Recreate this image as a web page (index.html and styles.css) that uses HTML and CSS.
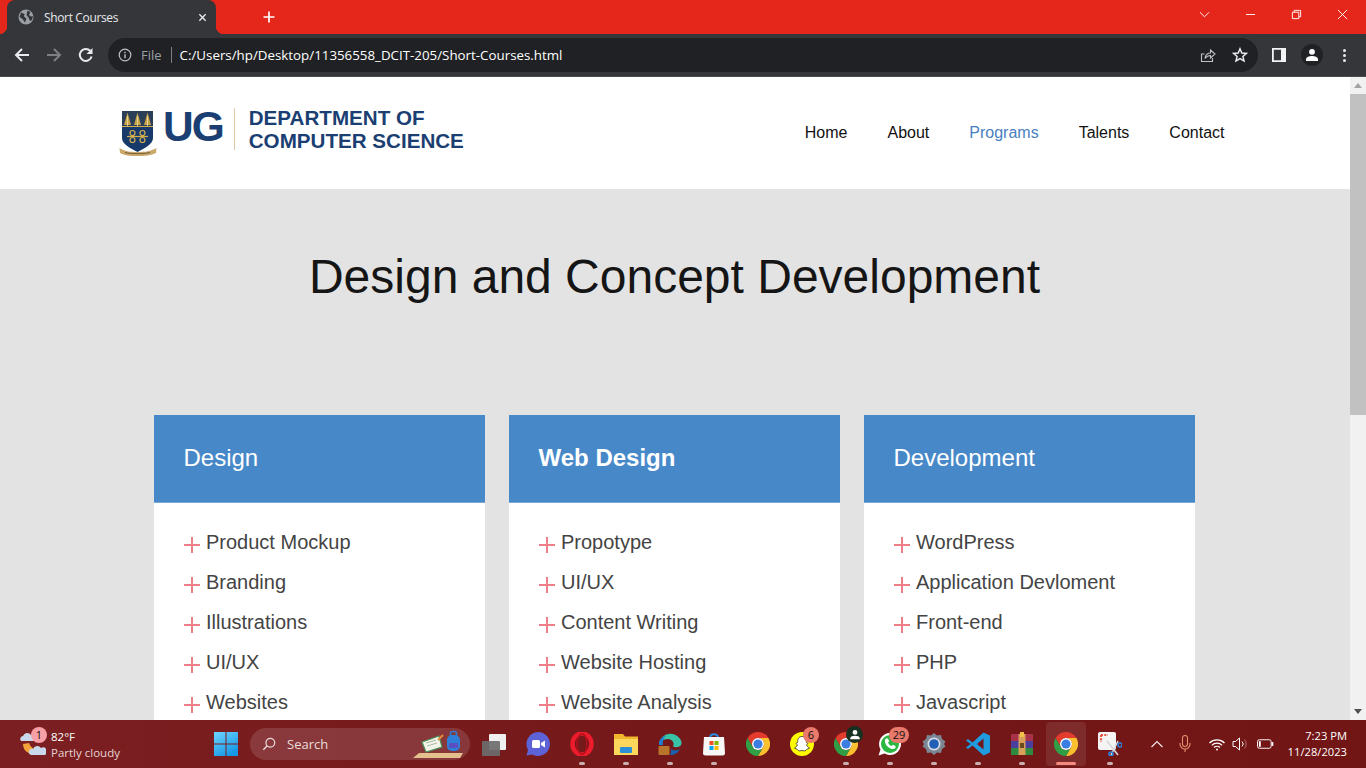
FILE: index.html
```html
<html>
    <head>
        <title>Short Courses</title>
        <link rel="stylesheet" href="styles.css">
    </head>
    <body>
        <svg class="defs" width="0" height="0">
            <defs>
                <linearGradient id="startblue" x1="0" y1="0" x2="0.6" y2="1">
                    <stop offset="0" stop-color="#6fd6ff"/>
                    <stop offset="1" stop-color="#1597e5"/>
                </linearGradient>
            </defs>
            <symbol id="chrome" viewBox="0 0 24 24">
                <path d="M1.600 6A12 12 0 0 1 22.400 6H12A6 6 0 0 0 6.800 15Z" fill="#e33b2e"/>
                <path d="M22.400 6A12 12 0 0 1 12 24L17.200 15A6 6 0 0 0 12 6Z" fill="#fbc02d"/>
                <path d="M12 24A12 12 0 0 1 1.600 6L6.800 15A6 6 0 0 0 17.200 15Z" fill="#2f9e44"/>
                <circle cx="12" cy="12" r="6" fill="#fff"/>
                <circle cx="12" cy="12" r="4.600" fill="#3b7de0"/>
            </symbol>
        </svg>

        <!-- browser frame -->
        <div class="titlebar">
            <div class="tab">
                <svg class="favicon" viewBox="0 0 16 16"><circle cx="8" cy="8" r="7.500" fill="#9aa0a6"/><path d="M3 3.500L6.500 5 6 7.500 8.500 9.500 7 13.500 4.500 10 1.500 8ZM9.500 1.500L12.500 3 11 6 13 7.500 15 7 14 11 12 12 10.500 8.500 8.500 6Z" fill="#35363a"/></svg>
                <span class="tab-title">Short Courses</span>
                <svg class="tab-close" viewBox="0 0 10 10"><path d="M1.500 1.500L8.500 8.500M8.500 1.500L1.500 8.500" stroke="#e8eaed" stroke-width="1.500"/></svg>
            </div>
            <svg class="newtab" viewBox="0 0 12 12"><path d="M6 0.500V11.500M0.500 6H11.500" stroke="#fff" stroke-width="1.700"/></svg>
            <div class="window-btns">
                <svg viewBox="0 0 12 12"><path d="M1 3.500L6 8.500 11 3.500" fill="none" stroke="#fff"/></svg>
                <svg viewBox="0 0 12 12"><path d="M1 6H11" stroke="#fff"/></svg>
                <svg viewBox="0 0 12 12"><path d="M1.500 3.500H8.500V10.500H1.500ZM3.500 3.500V1.500H10.500V8.500H8.500" fill="none" stroke="#fff"/></svg>
                <svg viewBox="0 0 12 12"><path d="M1 1L11 11M11 1L1 11" stroke="#fff"/></svg>
            </div>
        </div>
        <div class="toolbar">
            <svg class="nav-icon" viewBox="0 0 16 16"><path d="M15 8H2M8 2L2 8 8 14" fill="none" stroke="#e8eaed" stroke-width="2"/></svg>
            <svg class="nav-icon" viewBox="0 0 16 16"><path d="M1 8H14M8 2L14 8 8 14" fill="none" stroke="#7c7f84" stroke-width="2"/></svg>
            <svg class="nav-icon" viewBox="0 0 16 16"><path d="M13.600 9.500A6 6 0 1 1 12.200 3.800" fill="none" stroke="#e8eaed" stroke-width="2"/><path d="M14.500 1V7H8.500Z" fill="#e8eaed"/></svg>
            <div class="omnibox">
                <svg class="info-icon" viewBox="0 0 14 14"><circle cx="7" cy="7" r="5.800" fill="none" stroke="#bdc1c6" stroke-width="1.200"/><path d="M7 6.200V10.200M7 3.800V5.200" stroke="#bdc1c6" stroke-width="1.400"/></svg>
                <span class="file-label">File</span>
                <span class="url">C:/Users/hp/Desktop/11356558_DCIT-205/Short-Courses.html</span>
                <svg class="share-icon" viewBox="0 0 16 16"><path d="M4.500 7H1.500V14.500H12.500V11" fill="none" stroke="#bdc1c6" stroke-width="1.100"/><path d="M5 11.500C5.500 8 8 6 10.500 6V3L15 7 10.500 11V8.500C8.500 8.500 6.500 9.500 5 11.500Z" fill="none" stroke="#bdc1c6" stroke-width="1.100"/></svg>
                <svg class="star-icon" viewBox="0 0 16 16"><path d="M8 1.800L9.800 6 14.400 6.400 10.900 9.400 12 13.900 8 11.500 4 13.900 5.100 9.400 1.600 6.400 6.200 6Z" fill="none" stroke="#e8eaed" stroke-width="1.500"/></svg>
            </div>
            <svg class="panel-icon" viewBox="0 0 14 14"><path d="M0 0H14V14H0ZM1.800 1.800V12.200H9V1.800Z" fill="#f1f3f4" fill-rule="evenodd"/></svg>
            <div class="avatar"><svg viewBox="0 0 14 14"><circle cx="7" cy="3.800" r="2.900" fill="#fff"/><path d="M1 13V11.200C1 9 4.500 8 7 8S13 9 13 11.200V13Z" fill="#fff"/></svg></div>
            <div class="kebab"><i></i><i></i><i></i></div>
        </div>

        <!-- page inside browser -->
        <div class="viewport">
            <div class="page">
                <header class="site-header">
                    <div class="logo">
                        <svg class="crest" viewBox="0 0 38 46">
                            <path d="M3 1H34V28C34 34 26 38 18.500 42 11 38 3 34 3 28Z" fill="#173a6b"/>
                            <path d="M3 1H34V16H3Z" fill="#2c3f58"/>
                            <path d="M8.500 2.500L12 15H5ZM18.500 2.500L22 15H15ZM28.500 2.500L32 15H25Z" fill="#c9a54a"/>
                            <path d="M8.500 6V16M18.500 6V16M28.500 6V16" stroke="#f0e3b4" stroke-width=".7"/>
                            <path d="M3 16.500H34" stroke="#d7ae4c"/>
                            <g fill="none" stroke="#d7ae4c" stroke-width="1.200"><circle cx="13.500" cy="23" r="2.500"/><circle cx="23.500" cy="23" r="2.500"/><circle cx="13.500" cy="30" r="2.500"/><circle cx="23.500" cy="30" r="2.500"/><path d="M8 26.500H29"/></g>
                            <path d="M0.500 38C6 41.500 10 42 18.500 42S31 41.500 37.500 38L37 43C32 45.500 26 46 18.500 46S5 45.500 1 43Z" fill="#c9a86a"/>
                            <path d="M6 42.500C12 44 25 44 31 42.500" stroke="#5b4a2a" stroke-width=".8" fill="none"/>
                        </svg>
                        <span class="logo-ug">UG</span>
                        <span class="logo-rule"></span>
                        <span class="logo-dept">DEPARTMENT OF<br>COMPUTER SCIENCE</span>
                    </div>
                    <nav class="site-nav">
                        <a>Home</a>
                        <a>About</a>
                        <a class="active">Programs</a>
                        <a>Talents</a>
                        <a>Contact</a>
                    </nav>
                </header>

                <section class="hero">
                    <h1>Design and Concept Development</h1>
                </section>

                <section class="cards">
                    <div class="card">
                        <h2>Design</h2>
                        <ul>
                            <li>Product Mockup</li>
                            <li>Branding</li>
                            <li>Illustrations</li>
                            <li>UI/UX</li>
                            <li>Websites</li>
                        </ul>
                    </div>
                    <div class="card">
                        <h2 class="strong">Web Design</h2>
                        <ul>
                            <li>Propotype</li>
                            <li>UI/UX</li>
                            <li>Content Writing</li>
                            <li>Website Hosting</li>
                            <li>Website Analysis</li>
                        </ul>
                    </div>
                    <div class="card">
                        <h2>Development</h2>
                        <ul>
                            <li>WordPress</li>
                            <li>Application Devloment</li>
                            <li>Front-end</li>
                            <li>PHP</li>
                            <li>Javascript</li>
                        </ul>
                    </div>
                </section>
            </div>
            <div class="scrollbar">
                <div class="arrow-up"></div>
                <div class="thumb"></div>
                <div class="arrow-down"></div>
            </div>
        </div>

        <!-- windows taskbar -->
        <div class="taskbar">
            <div class="weather">
                <div class="weather-icon">
                    <svg viewBox="0 0 26 26"><path d="M3 13A10 10 0 0 0 21 19 10 10 0 0 1 9 12Z" fill="#f2a33a"/><path d="M1 10A3 3 0 0 1 3 5 4.500 4.500 0 0 1 11 4 3 3 0 0 1 14 10Z" fill="#c9d8ea"/><path d="M11 24A3 3 0 0 1 13 18 4.500 4.500 0 0 1 21 17 3.500 3.500 0 0 1 25 24Z" fill="#c9d8ea"/></svg>
                    <span class="weather-badge">1</span>
                </div>
                <div class="weather-text">
                    <div class="temp">82°F</div>
                    <div class="sky">Partly cloudy</div>
                </div>
            </div>
            <div class="tb-cell">
                <svg class="tb-icon" viewBox="0 0 24 24"><path d="M0 0H11.500V11.500H0ZM12.500 0H24V11.500H12.500ZM0 12.500H11.500V24H0ZM12.500 12.500H24V24H12.500Z" fill="url(#startblue)"/></svg>
            </div>
            <div class="searchbox">
                <svg class="search-glass" viewBox="0 0 16 16"><circle cx="9.500" cy="6.500" r="5" fill="none" stroke="#e9dcdc" stroke-width="1.400"/><path d="M6 10L1.500 14.500" stroke="#e9dcdc" stroke-width="1.600"/></svg>
                <span>Search</span>
                <svg class="search-art" viewBox="0 0 52 30"><path d="M1 29L7 24H51L48 29Z" fill="#e4c08d"/><path d="M10 13L27 7 30 18 14 23Z" fill="#f1f4e6" stroke="#4a8f5b" stroke-width="1.200"/><path d="M14 14L24 11M15 17L25 14" stroke="#9aa89a" stroke-width=".8"/><path d="M26 11L31 6" stroke="#e88a3a" stroke-width="2"/><rect x="35" y="6" width="13" height="16" rx="5" fill="#2f7fd8"/><rect x="38.500" y="2.500" width="6" height="6" rx="2" fill="none" stroke="#2f7fd8" stroke-width="1.500"/><rect x="37" y="14" width="9" height="5" rx="1" fill="#5a4fc0"/></svg>
            </div>
            <div class="tb-cell">
                <svg class="tb-icon" viewBox="0 0 24 24"><rect x="7" y="2" width="17" height="16" rx="1" fill="#efefef"/><rect x="0" y="9" width="18" height="15" rx="1" fill="#6d6d6d" opacity=".92"/></svg>
            </div>
            <div class="tb-cell">
                <svg class="tb-icon" viewBox="0 0 24 24"><path d="M12 0A12 12 0 1 1 6 22.400L0.500 23.500 2 18A12 12 0 0 1 12 0Z" fill="#5d62d6"/><rect x="6" y="8" width="8" height="8" rx="1.500" fill="#fff"/><path d="M15 11L19 8.500V15.500L15 13Z" fill="#fff"/></svg>
            </div>
            <div class="tb-cell has-dot">
                <svg class="tb-icon" viewBox="0 0 24 24"><ellipse cx="12" cy="12" rx="9.500" ry="10.500" fill="none" stroke="#ec1c2c" stroke-width="4.500"/><ellipse cx="12" cy="12" rx="5" ry="10" fill="none" stroke="#b3101d" stroke-width="1.500"/></svg>
            </div>
            <div class="tb-cell has-dot">
                <svg class="tb-icon" viewBox="0 0 24 24"><path d="M0 2H9L11 4.500H24V23H0Z" fill="#f1b82d"/><path d="M0 7H24V23H0Z" fill="#fbd75b"/><rect x="6" y="15" width="12" height="6" rx="1" fill="#2d8fd6"/></svg>
            </div>
            <div class="tb-cell has-dot">
                <svg class="tb-icon" viewBox="0 0 24 24"><path d="M1 12A11.500 11.500 0 0 1 23.500 10C24 15 19 16 15 14.500 17 11 14 7 10 7 5 7 2 10 1 12Z" fill="#39c3a6"/><path d="M1 12C1 7 5 4 8 4 5 6 4.500 10 5 13H1Z" fill="#1d7fd4"/><rect x="0.500" y="14" width="11" height="9" rx="1" fill="#b8742b"/><path d="M12 23A11 11 0 0 0 22 17C19 19 15 18.500 13 17V20Z" fill="#1a5fb0"/></svg>
            </div>
            <div class="tb-cell has-dot">
                <svg class="tb-icon" viewBox="0 0 24 24"><path d="M8 6C8 1 16 1 16 6" fill="none" stroke="#2a8be0" stroke-width="2"/><path d="M2 5H22L23 21A2.500 2.500 0 0 1 20.500 23.500H3.500A2.500 2.500 0 0 1 1 21Z" fill="#f7f7f7"/><rect x="7.500" y="9" width="4" height="4" fill="#f25022"/><rect x="12.500" y="9" width="4" height="4" fill="#7fba00"/><rect x="7.500" y="14" width="4" height="4" fill="#00a4ef"/><rect x="12.500" y="14" width="4" height="4" fill="#ffb900"/></svg>
            </div>
            <div class="tb-cell"><svg class="tb-icon"><use href="#chrome"/></svg></div>
            <div class="tb-cell">
                <svg class="tb-icon" viewBox="0 0 24 24"><circle cx="12" cy="12" r="12" fill="#fffc00"/><path d="M12 4.500C15.500 4.500 16.500 7.500 16.300 10.500L18 11.500 16.500 13C17 14.500 19 15.500 19.500 16L16.500 17.500 15 19 12 18.500 9 19 7.500 17.500 4.500 16C5 15.500 7 14.500 7.500 13L6 11.500 7.700 10.500C7.500 7.500 8.500 4.500 12 4.500Z" fill="#fff" stroke="#333" stroke-width=".8"/></svg>
                <span class="tb-badge">6</span>
            </div>
            <div class="tb-cell has-dot">
                <svg class="tb-icon"><use href="#chrome"/></svg>
                <span class="tb-profile"><svg viewBox="0 0 14 14"><circle cx="7" cy="4" r="2.800" fill="#fff"/><path d="M1.500 12V10.800C1.500 9 4.500 8 7 8S12.500 9 12.500 10.800V12Z" fill="#fff"/></svg></span>
            </div>
            <div class="tb-cell has-dot">
                <svg class="tb-icon" viewBox="0 0 24 24"><path d="M12 1A11 11 0 1 1 6.500 21.500L0.500 23.500 2.500 17.500A11 11 0 0 1 12 1Z" fill="#fff"/><circle cx="12" cy="12" r="9" fill="#2bb741"/><path d="M8 6.500C6 8 7 12 9.500 14.500S15.500 18 17.500 16L17.500 14 14.800 12.800 13.500 14C12 13.500 10.500 12 10 10.500L11.200 9.200 10 6.500Z" fill="#fff"/></svg>
                <span class="tb-badge wide">29</span>
            </div>
            <div class="tb-cell has-dot">
                <svg class="tb-icon" viewBox="0 0 24 24"><path d="M12 1L15 3.500 19 3 20 7 23.500 9.500 22 12 23.500 14.500 20 17 19 21 15 20.500 12 23 9 20.500 5 21 4 17 0.500 14.500 2 12 0.500 9.500 4 7 5 3 9 3.500Z" fill="#7d8794"/><circle cx="12" cy="12" r="6.500" fill="#d8dde3"/><circle cx="12" cy="12" r="4.800" fill="#1f5fb5"/></svg>
            </div>
            <div class="tb-cell has-dot">
                <svg class="tb-icon" viewBox="0 0 24 24"><path d="M17.500 0.500L24 3.500V20.500L17.500 23.500 6.500 13.500 2 17 0 15.500 4.500 12 0 8.500 2 7 6.500 10.500ZM17.500 6.500L11 12 17.500 17.500Z" fill="#1f9be0" fill-rule="evenodd"/></svg>
            </div>
            <div class="tb-cell has-dot">
                <svg class="tb-icon" viewBox="0 0 24 24"><rect x="1" y="2" width="22" height="7" fill="#a8324a"/><rect x="1" y="9" width="22" height="7" fill="#4a3f9e"/><rect x="1" y="16" width="22" height="7" fill="#2f8a3f"/><rect x="8.500" y="2" width="7" height="21" fill="#d9a05b"/><rect x="10" y="0" width="4" height="5" fill="#f0c24a"/><rect x="10" y="11" width="4" height="5" fill="#6b4a1f"/></svg>
            </div>
            <div class="tb-cell active">
                <svg class="tb-icon"><use href="#chrome"/></svg>
            </div>
            <div class="tb-cell has-dot">
                <svg class="tb-icon" viewBox="0 0 24 24"><rect x="0" y="0" width="18" height="18" rx="2" fill="#f4f4f4"/><path d="M3 3H10M3 3V10" stroke="#e8503f" stroke-width="2.200" stroke-dasharray="2 1.300" fill="none"/><path d="M9 9L20 23M20 9L13 23" stroke="#d5d9de" stroke-width="1.600"/><circle cx="22" cy="13" r="2" fill="none" stroke="#2a86e0" stroke-width="1.500"/><circle cx="13" cy="22" r="2" fill="none" stroke="#2a86e0" stroke-width="1.500"/></svg>
            </div>
            <div class="tray">
                <svg class="tray-chevron" viewBox="0 0 12 12"><path d="M0.500 9L6 3.500 11.500 9" fill="none" stroke="#f1e6e6" stroke-width="1.200"/></svg>
                <svg class="tray-mic" viewBox="0 0 12 18"><rect x="3.500" y="0.500" width="5" height="11" rx="2.500" fill="none" stroke="#e8906f" stroke-width="1.100"/><path d="M1 8V9A5 5 0 0 0 11 9V8M6 14V17" fill="none" stroke="#e8906f" stroke-width="1.100"/></svg>
                <svg class="tray-wifi" viewBox="0 0 16 12"><path d="M0.500 4.500A10.500 10.500 0 0 1 15.500 4.500M2.800 6.800A7.300 7.300 0 0 1 13.200 6.800M5 9A4.200 4.200 0 0 1 11 9" fill="none" stroke="#fff" stroke-width="1.200"/><circle cx="8" cy="11" r="1" fill="#fff"/></svg>
                <svg class="tray-vol" viewBox="0 0 16 14"><path d="M1 4.500H3.500L7.500 1V13L3.500 9.500H1Z" fill="none" stroke="#fff" stroke-width="1"/><path d="M10 4.500A3.500 3.500 0 0 1 10 9.500" fill="none" stroke="#fff"/><path d="M12.500 2.500A7 7 0 0 1 12.500 11.500" fill="none" stroke="#b5736f"/></svg>
                <svg class="tray-batt" viewBox="0 0 18 10"><rect x="0.500" y="0.500" width="14.500" height="9" rx="2" fill="none" stroke="#fff"/><rect x="2" y="2" width="2" height="6" fill="#fff"/><rect x="15.500" y="3" width="1.800" height="4" fill="#fff"/></svg>
                <div class="clock">
                    <div>7:23 PM</div>
                    <div>11/28/2023</div>
                </div>
            </div>
        </div>
    </body>
</html>
```

FILE: styles.css
```css
html, body {
    margin: 0;
    height: 768px;
    overflow: hidden;
}

body {
    display: flex;
    flex-direction: column;
    background-color: #e3e3e3;
    font-family: "Liberation Sans", Arial, sans-serif;
}

.defs {
    position: absolute;
}

/* browser frame */

.titlebar {
    height: 34px;
    flex: none;
    display: flex;
    align-items: flex-end;
    background-color: #e4261b;
    padding-left: 7px;
}

.tab {
    position: relative;
    width: 209px;
    height: 34px;
    box-sizing: border-box;
    display: flex;
    align-items: center;
    padding: 0 9px 0 11px;
    background-color: #35363a;
    border-radius: 8px 8px 0 0;
}

/* the little flare at the bottom corners of a chrome tab */
.tab::before,
.tab::after {
    content: "";
    position: absolute;
    bottom: 0;
    width: 8px;
    height: 8px;
}

.tab::before {
    left: -8px;
    background: radial-gradient(circle at 0 0, transparent 8px, #35363a 8.500px);
}

.tab::after {
    right: -8px;
    background: radial-gradient(circle at 100% 0, transparent 8px, #35363a 8.500px);
}

.favicon {
    width: 16px;
    height: 16px;
    margin-right: 10px;
}

.tab-title {
    flex: 1;
    color: #e8eaed;
    font-family: "Open Sans", sans-serif;
    font-size: 12px;
    letter-spacing: -0.35px;
}

.tab-close {
    width: 9px;
    height: 9px;
}

.newtab {
    width: 12px;
    height: 12px;
    margin: 0 0 11px 47px;
}

.window-btns {
    margin-left: auto;
    align-self: flex-start;
    display: flex;
    align-items: center;
    height: 28px;
    padding-right: 18px;
    gap: 35px;
}

.window-btns svg {
    width: 11px;
    height: 11px;
}

.toolbar {
    height: 43px;
    flex: none;
    box-sizing: border-box;
    display: flex;
    align-items: center;
    padding-left: 14px;
    background-color: #35363a;
    border-bottom: 1px solid #4a4b4f;
}

.nav-icon {
    width: 16px;
    height: 16px;
    margin-right: 16px;
}

.omnibox {
    width: 1150px;
    height: 34px;
    margin-left: -2px;
    box-sizing: border-box;
    display: flex;
    align-items: center;
    padding: 0 10px 0 10px;
    background-color: #202124;
    border-radius: 17px;
}

.info-icon {
    width: 14px;
    height: 14px;
}

.file-label {
    margin-left: 9px;
    padding-right: 9px;
    border-right: 1px solid #7c7f84;
    color: #9aa0a6;
    font-family: "Open Sans", sans-serif;
    font-size: 13px;
    line-height: 16px;
}

.url {
    flex: 1;
    margin-left: 8px;
    color: #fff;
    font-family: "Open Sans", sans-serif;
    font-size: 13.330px;
}

.share-icon {
    width: 16px;
    height: 16px;
    margin-right: 16px;
}

.star-icon {
    width: 16px;
    height: 16px;
}

.panel-icon {
    width: 14px;
    height: 14px;
    margin-left: 14px;
}

.avatar {
    width: 22px;
    height: 22px;
    margin-left: 15px;
    display: flex;
    align-items: center;
    justify-content: center;
    background-color: #202124;
    border-radius: 50%;
}

.avatar svg {
    width: 14px;
    height: 14px;
}

.kebab {
    margin-left: 20px;
    display: flex;
    flex-direction: column;
    gap: 2px;
}

.kebab i {
    width: 3px;
    height: 3px;
    background-color: #e8eaed;
    border-radius: 50%;
}

/* page */

.viewport {
    height: 643px;
    flex: none;
    display: flex;
    overflow: hidden;
}

.page {
    width: 1350px;
    flex: none;
}

.site-header {
    height: 112px;
    box-sizing: border-box;
    display: flex;
    align-items: center;
    justify-content: space-between;
    padding: 0 125.500px 0 119px;
    background-color: #fff;
}

.logo {
    height: 46px;
    display: flex;
    align-items: flex-start;
    color: #1b3f73;
    font-weight: bold;
}

.crest {
    width: 38px;
    height: 46px;
}

.logo-ug {
    margin: -5px 0 0 6px;
    font-size: 42.500px;
    line-height: 44px;
    letter-spacing: -2px;
}

.logo-rule {
    width: 1px;
    height: 42px;
    margin: -2px 14px 0 11px;
    background-color: #e0c9a6;
}

.logo-dept {
    margin-top: -3px;
    font-size: 20.600px;
    line-height: 22.500px;
}

.site-nav {
    display: flex;
    gap: 40px;
}

.site-nav a {
    color: #111;
    font-size: 16px;
}

.site-nav a.active {
    color: #4a7fc1;
}

.hero {
    height: 226px;
    box-sizing: border-box;
    padding: 60px 1px 0 0;
    text-align: center;
}

.hero h1 {
    margin: 0;
    color: #151515;
    font-size: 48px;
    font-weight: normal;
    line-height: 55px;
}

.cards {
    display: flex;
    justify-content: center;
    gap: 24px;
    padding-right: 2px;
}

.card {
    width: 331px;
    background-color: #fff;
}

.card h2 {
    height: 88px;
    box-sizing: border-box;
    margin: 0;
    padding-left: 30px;
    border-bottom: 1px solid #7aa9d8;
    background-color: #4789c8;
    color: #fff;
    font-size: 24px;
    font-weight: normal;
    line-height: 86px;
}

.card h2.strong {
    font-weight: bold;
}

.card ul {
    margin: 0;
    padding: 19px 30px 40px;
    list-style: none;
}

.card li {
    display: flex;
    align-items: center;
    height: 40px;
    color: #444;
    font-size: 20px;
}

.card li::before {
    content: "";
    width: 16px;
    height: 16px;
    margin: 5px 6.500px 0 0;
    background:
        linear-gradient(#ee7f88, #ee7f88) center / 16px 2px no-repeat,
        linear-gradient(#ee7f88, #ee7f88) center / 2px 16px no-repeat;
}

.scrollbar {
    width: 16px;
    flex: none;
    display: flex;
    flex-direction: column;
    background-color: #f1f1f1;
}

.arrow-up {
    height: 0;
    margin: 6px auto 6px;
    border: 4px solid transparent;
    border-top: 0;
    border-bottom: 5px solid #a3a3a3;
}

.thumb {
    height: 321px;
    background-color: #c1c1c1;
}

.arrow-down {
    height: 0;
    margin: auto auto 6px;
    border: 4px solid transparent;
    border-bottom: 0;
    border-top: 5px solid #505050;
}

/* taskbar */

.taskbar {
    height: 48px;
    flex: none;
    display: flex;
    align-items: center;
    background: linear-gradient(90deg, #7b1f22, #741819 50%, #711515);
    color: #fff;
    font-family: "Open Sans", sans-serif;
}

.weather {
    width: 204px;
    flex: none;
    box-sizing: border-box;
    padding-left: 20px;
    display: flex;
    align-items: center;
}

.weather-icon {
    position: relative;
    width: 26px;
    height: 26px;
}

.weather-icon svg {
    width: 26px;
    height: 26px;
}

.weather-badge {
    position: absolute;
    top: -4px;
    left: 11px;
    width: 16px;
    height: 16px;
    background-color: #f8a0a8;
    border-radius: 50%;
    color: #111;
    font-size: 11px;
    line-height: 16px;
    text-align: center;
}

.weather-text {
    margin: 1px 0 0 5px;
    font-size: 11.500px;
    line-height: 16px;
}

.sky {
    color: #e4d4d4;
}

.tb-cell {
    position: relative;
    width: 44px;
    height: 44px;
    flex: none;
    display: flex;
    align-items: center;
    justify-content: center;
}

.tb-icon {
    width: 24px;
    height: 24px;
}

.has-dot::after {
    content: "";
    position: absolute;
    bottom: 1px;
    left: 19px;
    width: 6px;
    height: 3px;
    background-color: #c9b0b0;
    border-radius: 2px;
}

.tb-cell.active {
    width: 40px;
    margin: 0 2px;
    background-color: rgba(255, 255, 255, 0.09);
    border-radius: 4px;
}

.tb-cell.active::after {
    content: "";
    position: absolute;
    bottom: 1px;
    left: 10px;
    width: 20px;
    height: 3px;
    background-color: #f58a80;
    border-radius: 2px;
}

.tb-badge {
    position: absolute;
    top: 5px;
    left: 23px;
    min-width: 16px;
    height: 16px;
    background-color: #e8796b;
    border-radius: 8px;
    color: #111;
    font-size: 11px;
    line-height: 16px;
    text-align: center;
}

.tb-badge.wide {
    left: 21px;
    width: 20px;
}

.tb-profile {
    position: absolute;
    top: 4px;
    left: 22px;
    width: 17px;
    height: 17px;
    display: flex;
    align-items: center;
    justify-content: center;
    background-color: #17301f;
    border-radius: 50%;
}

.tb-profile svg {
    width: 12px;
    height: 12px;
}

.searchbox {
    width: 220px;
    height: 32px;
    flex: none;
    margin: 0 2px;
    box-sizing: border-box;
    display: flex;
    align-items: center;
    padding: 0 6px 0 12px;
    background-color: rgba(255, 255, 255, 0.13);
    border-radius: 16px;
    color: #e9dcdc;
    font-size: 13px;
}

.search-glass {
    width: 14px;
    height: 14px;
    margin-right: 11px;
}

.search-art {
    width: 52px;
    height: 30px;
    margin-left: auto;
}

.tray {
    margin-left: auto;
    display: flex;
    align-items: center;
    padding-right: 19px;
}

.tray-chevron {
    width: 12px;
    height: 12px;
    margin-right: 16px;
}

.tray-mic {
    width: 12px;
    height: 18px;
    margin-right: 18px;
}

.tray-wifi {
    width: 16px;
    height: 13px;
    margin-right: 7px;
}

.tray-vol {
    width: 16px;
    height: 14px;
    margin-right: 9px;
}

.tray-batt {
    width: 17px;
    height: 10px;
}

.clock {
    width: 72px;
    margin-left: 1px;
    font-size: 11.200px;
    line-height: 16px;
    text-align: right;
}
```
